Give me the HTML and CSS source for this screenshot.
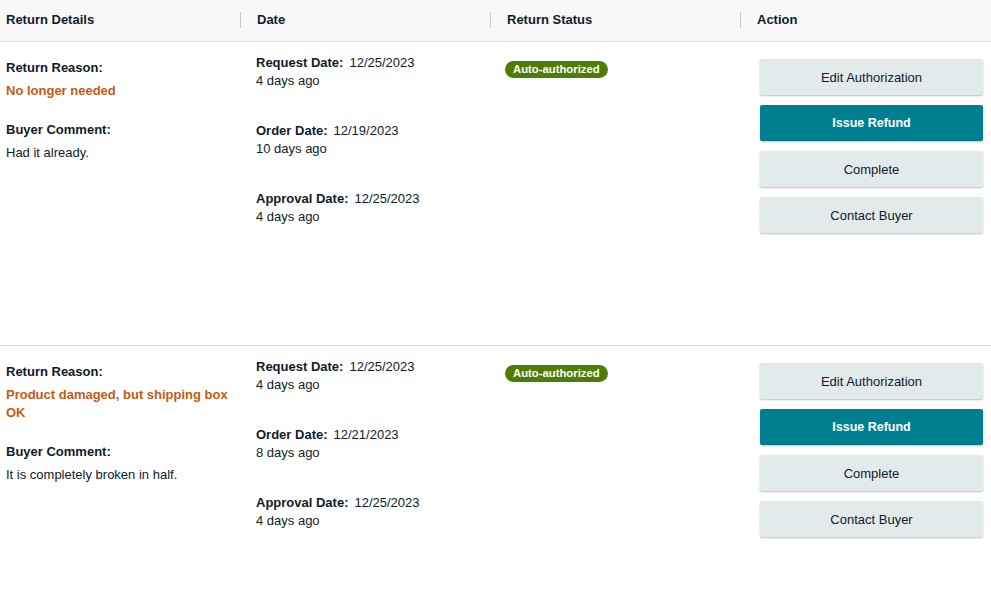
FILE: index.html
```html
<!DOCTYPE html>
<html lang="en">
<head>
    <meta charset="UTF-8">
    <title>Returns</title>
    <link rel="stylesheet" href="styles.css">
</head>
<body>
    <div class="returns-table">
        <div class="table-head">
            <div class="col col-details">Return Details</div>
            <div class="col col-date">Date</div>
            <div class="col col-status">Return Status</div>
            <div class="col col-action">Action</div>
        </div>

        <div class="table-row">
            <div class="col col-details">
                <div class="info-block">
                    <div class="label">Return Reason:</div>
                    <div class="reason">No longer needed</div>
                </div>
                <div class="info-block">
                    <div class="label">Buyer Comment:</div>
                    <div class="comment">Had it already.</div>
                </div>
            </div>
            <div class="col col-date">
                <div class="date-block">
                    <div><span class="label">Request Date:</span>12/25/2023</div>
                    <div>4 days ago</div>
                </div>
                <div class="date-block">
                    <div><span class="label">Order Date:</span>12/19/2023</div>
                    <div>10 days ago</div>
                </div>
                <div class="date-block">
                    <div><span class="label">Approval Date:</span>12/25/2023</div>
                    <div>4 days ago</div>
                </div>
            </div>
            <div class="col col-status">
                <span class="badge">Auto-authorized</span>
            </div>
            <div class="col col-action">
                <button class="btn">Edit Authorization</button>
                <button class="btn btn-primary">Issue Refund</button>
                <button class="btn">Complete</button>
                <button class="btn">Contact Buyer</button>
            </div>
        </div>

        <div class="table-row">
            <div class="col col-details">
                <div class="info-block">
                    <div class="label">Return Reason:</div>
                    <div class="reason">Product damaged, but shipping box OK</div>
                </div>
                <div class="info-block">
                    <div class="label">Buyer Comment:</div>
                    <div class="comment">It is completely broken in half.</div>
                </div>
            </div>
            <div class="col col-date">
                <div class="date-block">
                    <div><span class="label">Request Date:</span>12/25/2023</div>
                    <div>4 days ago</div>
                </div>
                <div class="date-block">
                    <div><span class="label">Order Date:</span>12/21/2023</div>
                    <div>8 days ago</div>
                </div>
                <div class="date-block">
                    <div><span class="label">Approval Date:</span>12/25/2023</div>
                    <div>4 days ago</div>
                </div>
            </div>
            <div class="col col-status">
                <span class="badge">Auto-authorized</span>
            </div>
            <div class="col col-action">
                <button class="btn">Edit Authorization</button>
                <button class="btn btn-primary">Issue Refund</button>
                <button class="btn">Complete</button>
                <button class="btn">Contact Buyer</button>
            </div>
        </div>
    </div>
</body>
</html>
```

FILE: styles.css
```css
/* base */
body {
    margin: 0;
    font-family: "Liberation Sans", Arial, sans-serif;
    font-size: 13px;
    color: #0f1b2a;
    background: #ffffff;
}

.table-head,
.table-row {
    display: grid;
    grid-template-columns: 240px 250px 250px 1fr;
}

/* header */
.table-head {
    height: 42px;
    box-sizing: border-box;
    padding-bottom: 2px;
    align-items: center;
    background-color: #f8f8f8;
    border-bottom: 1px solid #dcdcdc;
    font-weight: bold;
}
.table-head .col {
    padding-left: 16px;
    line-height: 16px;
    border-left: 1px solid #c4c8cc;
}
.table-head .col-details {
    padding-left: 6px;
    border-left: none;
}

/* rows */
.table-row {
    height: 303px;
    border-bottom: 1px solid #dcdcdc;
}
.table-row .col {
    padding-left: 16px;
    line-height: 18px;
}
.table-row .col-details {
    padding: 17px 10px 0 6px;
}
.table-row .col-date {
    padding-top: 12px;
}
.table-row .col-status {
    padding-top: 18px;
    padding-left: 15px;
}
.table-row .col-action {
    display: flex;
    flex-direction: column;
    gap: 10px;
    padding: 17px 8px 0 20px;
}

.label {
    font-weight: bold;
}
.info-block {
    margin-bottom: 21px;
}
.info-block .label {
    margin-bottom: 5px;
}
.reason {
    color: #c55a11;
    font-weight: bold;
}
.date-block {
    margin-bottom: 32px;
}
.date-block .label {
    margin-right: 6px;
}

/* status badge */
.badge {
    display: inline-block;
    padding: 0 8px;
    height: 17px;
    line-height: 17px;
    border-radius: 9px;
    background-color: #4e7d06;
    color: #ffffff;
    font-size: 11.3px;
    font-weight: bold;
}

/* buttons */
.btn {
    height: 36px;
    border: none;
    border-radius: 2px;
    background-color: #e2eaeb;
    color: #0f1b2a;
    font-family: inherit;
    font-size: 13px;
    box-shadow: 0 1px 2px rgba(0, 0, 0, 0.25);
    cursor: pointer;
}
.btn-primary {
    background-color: #007f91;
    color: #ffffff;
    font-weight: bold;
    font-size: 12.5px;
}
```
